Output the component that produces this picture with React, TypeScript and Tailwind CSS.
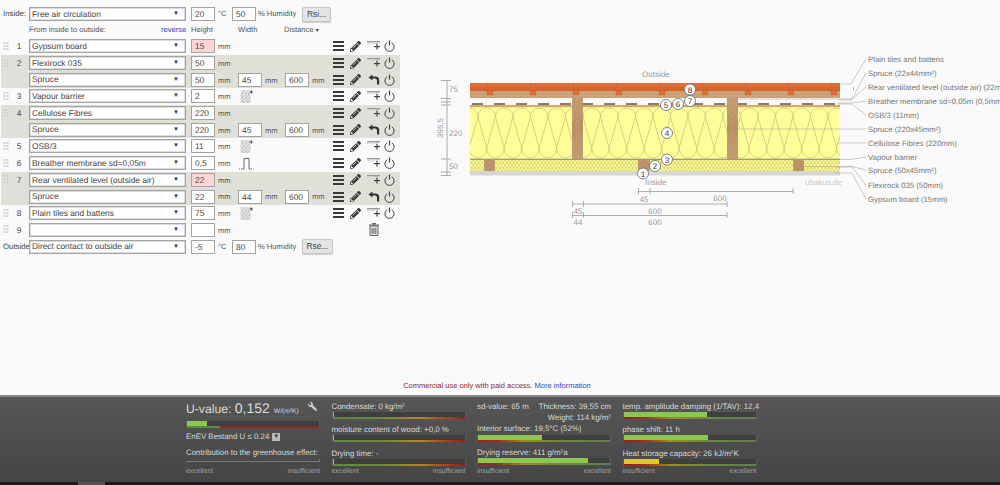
import React from "react";
import { FaPencilAlt, FaWrench } from "react-icons/fa";

const LS = "'Liberation Sans',Arial,sans-serif";

function Select({ text }: { text: string }) {
  return (
    <div className="flex items-center justify-between w-[157px] h-[14px] bg-white border border-[#a3a3a3] shadow-[inset_0_0_0_0.5px_#bbb] pl-[2px] pr-[6px] text-[8.4px] text-[#444] shrink-0">
      <span className="whitespace-nowrap">{text}</span>
      <span className="text-[6px] text-[#333] leading-none">▼</span>
    </div>
  );
}

function Num({ v, warn }: { v?: string; warn?: boolean }) {
  return (
    <div className={`w-[24px] h-[14px] border border-[#a3a3a3] pl-[3px] text-[8.4px] leading-[12px] text-[#444] shrink-0 ${warn ? "bg-[#fdd5d5]" : "bg-white"}`}>
      {v}
    </div>
  );
}

function Mm() {
  return <span className="text-[7.6px] text-[#555] ml-[3px] w-[20px] shrink-0 mt-[1px]">mm</span>;
}

function Grip() {
  return (
    <svg width="6" height="9" viewBox="0 0 6 9" className="shrink-0">
      {[0, 3, 6].map((y) => (
        <g key={y} fill="#cfcfcf">
          <rect x="0.5" y={y} width="2" height="2" />
          <rect x="3.5" y={y} width="2" height="2" />
        </g>
      ))}
    </svg>
  );
}

function Burger() {
  return (
    <svg width="11" height="10" viewBox="0 0 11 10">
      <rect y="0" width="11" height="2" fill="#3a3a3a" />
      <rect y="4" width="11" height="2" fill="#3a3a3a" />
      <rect y="8" width="11" height="2" fill="#3a3a3a" />
    </svg>
  );
}

function AddLayer() {
  return (
    <svg width="14" height="10" viewBox="0 0 14 10">
      <rect x="0" y="0" width="13" height="1.5" fill="#999" />
      <rect x="0" y="1.5" width="8" height="1.5" fill="#ddd" />
      <rect x="7" y="5" width="6" height="1.2" fill="#444" />
      <rect x="9.4" y="2.6" width="1.2" height="6" fill="#444" />
    </svg>
  );
}

function Back() {
  return (
    <svg width="12" height="11" viewBox="0 0 12 11">
      <path d="M4.5 0.5 L0.5 3.5 L4.5 6.5 V4.6 H7 C8.5 4.6 9 5.5 9 7 V10.5 H11.2 V6.2 C11.2 3.8 9.8 2.5 7.5 2.5 H4.5 Z" fill="#333" />
    </svg>
  );
}

function PowerIcon() {
  return (
    <svg width="11" height="12" viewBox="0 0 11 12" fill="none" stroke="#444" strokeWidth="1">
      <path d="M3.2 2.8 A4.6 4.6 0 1 0 7.8 2.8" />
      <path d="M5.5 0.5 V5.5" strokeWidth="1.2" />
    </svg>
  );
}

function Hatch() {
  return (
    <svg width="13" height="14" viewBox="0 0 13 14" className="ml-[2px]">
      <rect x="0.5" y="1" width="10" height="13" fill="#e2e2e2" />
      <path d="M1 13 C4 10 8 9 10 2 M1 10 C3 8 6 6 7 1.5 M3 14 C6 12 9 11 10.5 7 M1 6.5 C2 5.5 3 3.5 3.5 1.5 M7 14 C8 13 10 12 10.5 11" stroke="#999" strokeWidth="0.8" fill="none" strokeDasharray="1 0.7" />
      <path d="M9.8 3 H13 M11.4 1.4 V4.6" stroke="#333" strokeWidth="0.8" />
    </svg>
  );
}

function Step() {
  return (
    <svg width="15" height="13" viewBox="0 0 15 13" className="ml-[1px]" fill="none" stroke="#555" strokeWidth="0.9">
      <path d="M3.5 12 H5 V1.5 H10 V12 H11.5" />
      <path d="M0 12 H3 M12 12 H14.5" strokeDasharray="1 1" />
    </svg>
  );
}

function Trash() {
  return (
    <svg width="10" height="13" viewBox="0 0 10 13">
      <rect x="0" y="1.5" width="10" height="1.2" fill="#666" />
      <rect x="3" y="0" width="4" height="1.5" fill="#666" />
      <path d="M1 3 H9 V12.5 H1 Z" fill="#e4e4e4" stroke="#666" strokeWidth="1" />
      <path d="M3.2 5 V11 M5 5 V11 M6.8 5 V11" stroke="#666" strokeWidth="1" />
    </svg>
  );
}

type Row = {
  no?: string;
  name: string;
  h: string;
  warn?: boolean;
  w?: string;
  d?: string;
  grey?: boolean;
  extra?: "hatch" | "step";
  sub?: boolean;
};

const rows: Row[] = [
  { no: "1", name: "Gypsum board", h: "15", warn: true },
  { no: "2", name: "Flexirock 035", h: "50", grey: true },
  { name: "Spruce", h: "50", w: "45", d: "600", grey: true, sub: true },
  { no: "3", name: "Vapour barrier", h: "2", extra: "hatch" },
  { no: "4", name: "Cellulose Fibres", h: "220", grey: true },
  { name: "Spruce", h: "220", w: "45", d: "600", grey: true, sub: true },
  { no: "5", name: "OSB/3", h: "11", extra: "hatch" },
  { no: "6", name: "Breather membrane sd=0,05m", h: "0,5", extra: "step" },
  { no: "7", name: "Rear ventilated level (outside air)", h: "22", warn: true, grey: true },
  { name: "Spruce", h: "22", w: "44", d: "600", grey: true, sub: true },
  { no: "8", name: "Plain tiles and battens", h: "75", extra: "hatch" },
];

function LayerRow({ r }: { r: Row }) {
  return (
    <div className={`flex items-center h-[16.7px] w-[399px] ml-[1px] pl-[2px] ${r.grey ? "bg-[#e0e0d9]" : ""}`}>
      <div className="w-[6px] shrink-0">{r.no && <Grip />}</div>
      <div className="w-[20px] text-center text-[8.4px] text-[#444] shrink-0">{r.no}</div>
      <Select text={r.name} />
      <div className="w-[5px] shrink-0" />
      <Num v={r.h} warn={r.warn} />
      <Mm />
      {r.w && (
        <>
          <Num v={r.w} />
          <Mm />
          <Num v={r.d} />
          <Mm />
        </>
      )}
      {r.extra === "hatch" && <Hatch />}
      {r.extra === "step" && <Step />}
      <div className="ml-auto flex items-center gap-[6px] pr-[5px]">
        <Burger />
        <FaPencilAlt className="w-[11px] h-[11px] text-[#3a3a3a]" />
        <div className="w-[14px] flex justify-center">{r.sub ? <Back /> : <AddLayer />}</div>
        <div className="ml-[-3px]"><PowerIcon /></div>
      </div>
    </div>
  );
}

function Header() {
  return (
    <div className="flex items-center h-[14px] mt-[7px] pl-[3px] text-[7.8px] text-[#444]">
      <span className="w-[26px] shrink-0">Inside:</span>
      <Select text="Free air circulation" />
      <div className="w-[5px] shrink-0" />
      <Num v="20" />
      <span className="ml-[3px] w-[14px] text-[7.6px] text-[#555]">°C</span>
      <Num v="50" />
      <span className="ml-[2px] w-[44px] text-[7.6px] text-[#555] whitespace-nowrap">% Humidity</span>
      <button className="w-[29px] h-[15px] bg-[#e4e4e4] border border-[#c6c6c6] rounded-[2px] text-[8.4px] text-[#444] shadow-[0_1px_1px_#ccc]">Rsi...</button>
    </div>
  );
}

function Meter({ fill, fillColor, track }: { fill: number; fillColor?: string; track: string }) {
  return (
    <div className="relative w-[134px] h-[7px] border-x border-[#5d5d5d] bg-[#3f3f3f]">
      {fill > 0 && <div className="absolute left-0 top-0 h-[5px]" style={{ width: fill, background: fillColor ?? "#8cc850" }} />}
      <div className="absolute left-0 right-0 bottom-0 h-[2px]" style={{ background: track }} />
    </div>
  );
}

const GOOD_BAD = "linear-gradient(90deg,#5f8a45 0%,#6e8a3a 40%,#b08a20 65%,#a83a20 88%,#8a2020 100%)";
const BAD_GOOD = "linear-gradient(90deg,#8f2222 0%,#a32a20 15%,#a08a25 35%,#6e8a40 60%,#5f7f4f 100%)";

function Cap({ children, className = "" }: { children: React.ReactNode; className?: string }) {
  return <div className={`text-[7.9px] text-[#d8d8d8] leading-[11px] whitespace-nowrap ${className}`}>{children}</div>;
}

function Ends({ a, b, className = "mt-[1px]" }: { a: string; b: string; className?: string }) {
  return (
    <div className={`flex justify-between text-[6.9px] text-[#a0a0a0] leading-[10px] ${className}`}>
      <span>{a}</span>
      <span>{b}</span>
    </div>
  );
}

function Studs() {
  return (
    <>
      {[[484, 160, 11, 11], [638, 160, 12, 11], [793, 160, 11, 11], [572, 98, 11, 61], [727, 98, 11, 61]].map(([x, y, w, h], i) => (
        <g key={i}>
          <rect x={x} y={y} width={w} height={h} fill="#c39a70" />
          {[1.5, 3, 4.5].map((k) => (
            <ellipse key={k} cx={x + w / 2} cy={y + h / 2} rx={k} ry={k * (h > 20 ? 3.5 : 1.2)} fill="none" stroke="#aa7d52" strokeWidth="0.5" />
          ))}
        </g>
      ))}
    </>
  );
}

function woolPath() {
  let d = "";
  for (let c = 451.7; c < 860; c += 17.5) {
    const b = c + 8.75;
    d += ` M${c - 17.5} 148 L${c - 8.75} 117 C${c - 8.75} 111 ${c - 4} 108 ${c} 108 C${c + 4} 108 ${c + 8.75} 111 ${c + 8.75} 117 L${c + 17.5} 148`;
    d += ` M${b - 8.75} 148 C${b - 8.75} 154 ${b - 4} 158 ${b} 158 C${b + 4} 158 ${b + 8.75} 154 ${b + 8.75} 148`;
  }
  return d;
}

function Diagram() {
  const labels = [
    ["Plain tiles and battens", 59],
    ["Spruce (22x44mm²)", 73],
    ["Rear ventilated level (outside air) (22mm)", 87],
    ["Breather membrane sd=0,05m (0,5mm)", 101],
    ["OSB/3 (11mm)", 115],
    ["Spruce (220x45mm²)", 129],
    ["Cellulose Fibres (220mm)", 143],
    ["Vapour barrier", 157],
    ["Spruce (50x45mm²)", 170],
    ["Flexirock 035 (50mm)", 185],
    ["Gypsum board (15mm)", 199],
  ] as const;
  const leaders = [
    "M866 59 L851 84 H840",
    "M866 73 L852 99 H735",
    "M866 87 L851 100 H838",
    "M866 101 L852 103 H838",
    "M866 115 L852 104 H838",
    "M866 129 H733",
    "M866 143 H838",
    "M866 157 L851 159.5 H835",
    "M866 170 L852 166.5 H800",
    "M866 185 L852 167 H835",
    "M866 199 L852 173 H835",
  ];
  const balloons: [string, number, number][] = [
    ["1", 643, 173.5], ["2", 655, 166], ["3", 667, 159.5], ["4", 667, 133],
    ["5", 666, 105], ["6", 678, 104], ["7", 690, 101], ["8", 690, 89.5],
  ];
  const battens = Array.from({ length: 9 }, (_, i) => 488 + i * 43);
  const dashes = Array.from({ length: 17 }, (_, i) => 474 + i * 22);
  return (
    <svg width="600" height="200" viewBox="400 40 600 200" className="block shrink-0">
      <defs>
        <clipPath id="woolClip">
          <rect x="470" y="107" width="370" height="52" />
        </clipPath>
        <pattern id="zig" x="470" y="160" width="3.5" height="11" patternUnits="userSpaceOnUse">
          <path d="M0 0 L3.5 5.5 L0 11 M3.5 0 L0 5.5 L3.5 11" fill="none" stroke="#a89c4c" strokeWidth="0.45" />
        </pattern>
      </defs>

      <rect x="470" y="171" width="370" height="4.5" fill="#d6d6d2" />
      <rect x="470" y="160" width="370" height="11" fill="#ffff99" />
      <rect x="470" y="160" width="370" height="11" fill="url(#zig)" />
      <rect x="470" y="107" width="370" height="52" fill="#ffff99" />
      <g clipPath="url(#woolClip)" fill="none" stroke="#c9c57a" strokeWidth="0.8">
        <path d={woolPath()} />
      </g>
      <rect x="470" y="158.8" width="370" height="0.9" fill="#77744a" />
      <rect x="470" y="105" width="370" height="2.2" fill="#d2a878" />
      {dashes.map((x) => (
        <rect key={x} x={x - 2} y="103" width="11" height="2" fill="#8f7a62" />
      ))}
      <rect x="470" y="91" width="370" height="7" fill="#c9a27a" />
      <Studs />
      <rect x="470" y="83" width="370" height="4" fill="#dd6f38" />
      <rect x="470" y="87" width="370" height="4" fill="#d9632e" />
      {battens.map((x) => (
        <g key={x}>
          <rect x={x - 1} y="91" width="6" height="4" fill="#dd6f38" stroke="#b9562a" strokeWidth="0.3" />
          <rect x={x - 0.5} y="83" width="0.5" height="4" fill="#b9562a" />
          <rect x={x + 21} y="87" width="0.5" height="4" fill="#b9562a" />
        </g>
      ))}

      {leaders.map((d) => (
        <path key={d} d={d} fill="none" stroke="#999" strokeWidth="0.5" />
      ))}
      <g fontFamily={LS} fontSize="7.75" fill="#777">
        {labels.map(([t, y]) => (
          <text key={t} x="868" y={y + 3}>{t}</text>
        ))}
      </g>

      <g stroke="#999" strokeWidth="0.8" fill="none">
        <path d="M447 80 V175" />
        <path d="M441 80.5 H451 M441 98.5 H451 M441 102 H451 M441 105 H451 M441 159 H451 M441 172 H451 M441 175.5 H451" />
        <path d="M638.5 188 V194 M650 188 V194 M638.5 191.5 H793 M793 188 V194" />
        <path d="M572.5 201 V207 M583.5 201 V207 M727 201 V207 M572.5 204 H727" />
        <path d="M572.5 212 V218 M583.5 212 V218 M727 212 V218 M572.5 215.5 H727" />
      </g>
      <g fontFamily={LS} fontSize="8" fill="#999">
        <text x="449" y="92">75</text>
        <text x="449" y="136">220</text>
        <text x="449" y="169">50</text>
        <text x="443" y="128" transform="rotate(-90 443 128)" textAnchor="middle">395,5</text>
        <text x="642" y="77">Outside</text>
        <text x="645" y="185">Inside</text>
        <text x="805" y="185" fill="#c8c8c8">ubakus.de</text>
        <text x="644" y="202" textAnchor="middle">45</text>
        <text x="720" y="201" textAnchor="middle">600</text>
        <text x="578" y="214" textAnchor="middle">45</text>
        <text x="655" y="214" textAnchor="middle">600</text>
        <text x="578" y="225" textAnchor="middle">44</text>
        <text x="655" y="225" textAnchor="middle">600</text>
      </g>

      {balloons.map(([t, x, y]) => (
        <g key={t}>
          <circle cx={x} cy={y} r="5.5" fill="#fff" stroke="#666" strokeWidth="0.8" />
          <text x={x} y={y + 3} textAnchor="middle" fontSize="8" fill="#333" fontFamily={LS}>{t}</text>
        </g>
      ))}
    </svg>
  );
}

function BottomBar() {
  return (
    <footer className="h-[90px] shrink-0 border-t-2 border-[#8a8a8a] bg-gradient-to-b from-[#565656] to-[#454545] flex flex-col">
      <div className="flex-1 flex pl-[186px] pt-[4px] gap-[11.5px]">
        <div className="w-[134px]">
          <div className="flex items-baseline h-[17px] -mt-[3px] text-[#dcdcdc] whitespace-nowrap">
            <span className="text-[12.2px]">U-value:&nbsp;</span>
            <span className="text-[14px]">0,152</span>
            <span className="text-[6.7px] ml-[4px]">W/(m²K)</span>
            <FaWrench className="w-[9px] h-[9px] ml-[9px] text-[#ccc] self-center scale-x-[-1]" />
          </div>
          <div className="mt-[6px]">
            <Meter fill={20} track="linear-gradient(90deg,#5f8a45 0%,#5f8a45 24%,#8a2828 26%,#8a2828 100%)" />
          </div>
          <div className="flex items-center text-[7.9px] text-[#d8d8d8] mt-[4px] h-[10px] whitespace-nowrap">
            EnEV Bestand U ≤ 0.24
            <span className="ml-[3px] w-[8px] h-[8px] bg-[#bbb] flex items-center justify-center text-[6px] text-[#333] leading-none">▼</span>
          </div>
          <Cap className="mt-[5px]">Contribution to the greenhouse effect:</Cap>
          <div className="mt-[1px] h-[3px] border-r border-b border-[#777]" />
          <Ends a="excellent" b="insufficient" className="mt-[5px]" />
        </div>
        <div className="w-[134px]">
          <Cap>Condensate: 0 kg/m²</Cap>
          <Meter fill={1} track={GOOD_BAD} />
          <Cap className="mt-[5px]">moisture content of wood: +0,0 %</Cap>
          <Meter fill={1} track={GOOD_BAD} />
          <Cap className="mt-[6px]">Drying time: -</Cap>
          <Meter fill={1} track={GOOD_BAD} />
          <Ends a="excellent" b="insufficient" />
        </div>
        <div className="w-[134px]">
          <div className="flex justify-between"><Cap>sd-value: 65 m</Cap><Cap>Thickness: 39,55 cm</Cap></div>
          <Cap className="text-right">Weight: 114 kg/m²</Cap>
          <Cap>Interior surface: 19,5°C (52%)</Cap>
          <div className="mt-[1px]"><Meter fill={64} track={BAD_GOOD} /></div>
          <Cap className="mt-[5px]">Drying reserve: 411 g/m²a</Cap>
          <Meter fill={110} track={BAD_GOOD} />
          <Ends a="insufficient" b="excellent" className="mt-[2px]" />
        </div>
        <div className="w-[134px]">
          <Cap>temp. amplitude damping (1/TAV): 12,4</Cap>
          <Meter fill={83} track={BAD_GOOD} />
          <Cap className="mt-[5px]">phase shift: 11 h</Cap>
          <Meter fill={84} track={BAD_GOOD} />
          <Cap className="mt-[6px]">Heat storage capacity: 26 kJ/m²K</Cap>
          <Meter fill={35} fillColor="#ddcc11" track={BAD_GOOD} />
          <Ends a="insufficient" b="excellent" />
        </div>
      </div>
      <div className="h-[3px] bg-[#1c1c1c] flex shrink-0">
        <div className="ml-[78px] w-[27px] bg-[#555]" />
      </div>
    </footer>
  );
}

export default function App() {
  return (
    <div className="w-[1000px] h-[485px] overflow-hidden bg-[#fafafa] flex flex-col font-[family-name:'Liberation_Sans',Arial,sans-serif] [text-rendering:geometricPrecision]">
      <main className="flex-1 flex flex-col min-h-0">
        <div className="flex flex-1 min-h-0">
          <div className="w-[400px] shrink-0">
            <Header />
            <div className="flex items-center h-[13px] mt-[2px] text-[7.6px] text-[#555] pl-[29px]">
              <span className="w-[132px] shrink-0">From inside to outside:</span>
              <span className="w-[30px] shrink-0 text-[#3344cc]">reverse</span>
              <span className="w-[47px] shrink-0">Height</span>
              <span className="w-[46px] shrink-0">Width</span>
              <span>Distance <span className="text-[6px] text-[#333]">▾</span></span>
            </div>
            <div className="mt-[2px]">
              {rows.map((r, i) => (
                <LayerRow key={i} r={r} />
              ))}
              <div className="flex items-center h-[16.7px] ml-[1px] pl-[2px] w-[399px]">
                <div className="w-[6px] shrink-0"><Grip /></div>
                <div className="w-[20px] text-center text-[8.4px] text-[#444] shrink-0">9</div>
                <Select text="" />
                <div className="w-[5px] shrink-0" />
                <Num />
                <Mm />
                <div className="ml-[131px]"><Trash /></div>
              </div>
              <div className="flex items-center h-[16.7px] pl-[3px] text-[7.8px] text-[#444]">
                <span className="w-[26px] shrink-0">Outside</span>
                <Select text="Direct contact to outside air" />
                <div className="w-[5px] shrink-0" />
                <Num v="-5" />
                <span className="ml-[3px] w-[14px] text-[7.6px] text-[#555]">°C</span>
                <Num v="80" />
                <span className="ml-[2px] w-[44px] text-[7.6px] text-[#555] whitespace-nowrap">% Humidity</span>
                <button className="w-[31px] h-[15px] bg-[#e4e4e4] border border-[#c6c6c6] rounded-[2px] text-[8.4px] text-[#444] shadow-[0_1px_1px_#ccc]">Rse...</button>
              </div>
            </div>
          </div>
          <div className="pt-[40px]">
            <Diagram />
          </div>
        </div>
        <div className="h-[17px] shrink-0 text-center text-[7.5px] pr-[6px] text-[#8a2a2a] leading-[16px]">
          Commercial use only with paid access. <span className="text-[#3344cc]">More information</span>
        </div>
      </main>
      <BottomBar />
    </div>
  );
}
